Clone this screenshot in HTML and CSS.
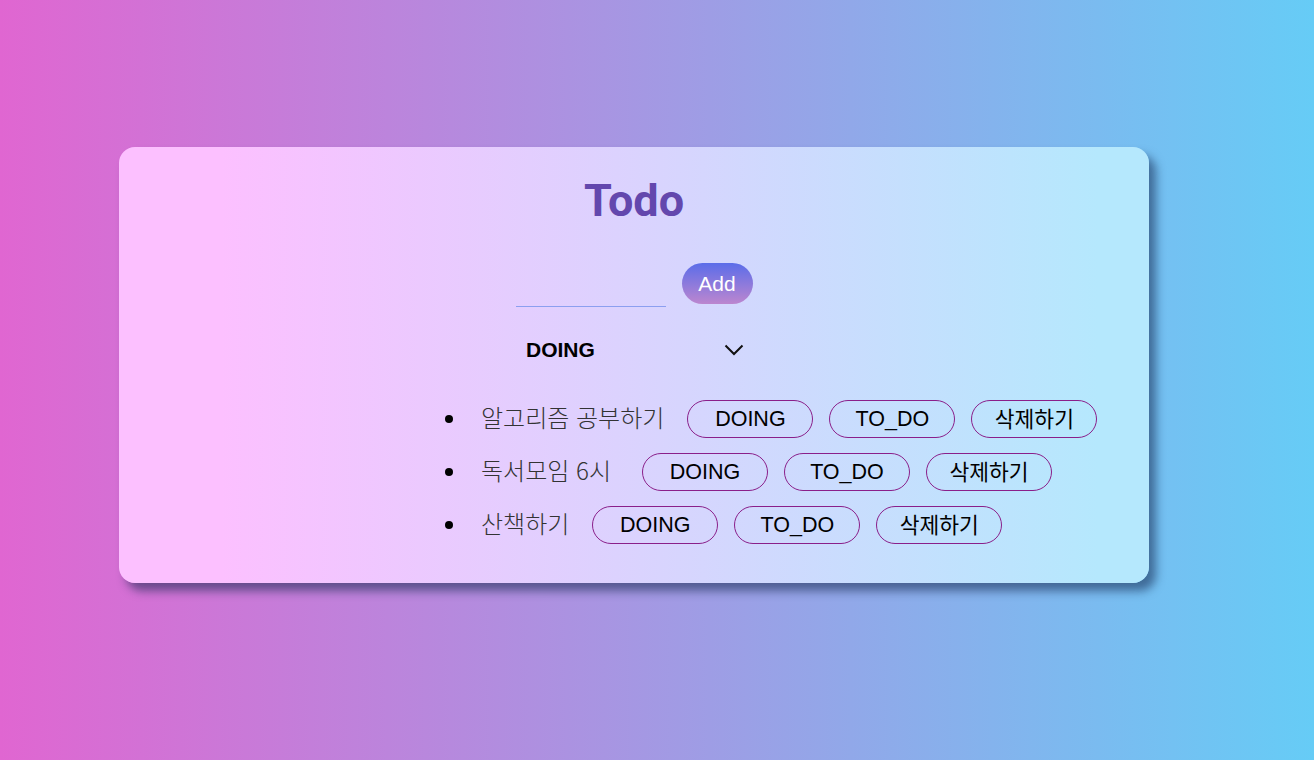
FILE: index.html
```html
<!DOCTYPE html>
<html lang="ko">
<head>
<meta charset="utf-8">
<title>Todo</title>
<link rel="stylesheet" href="styles.css">
</head>
<body>
<div class="page">
  <main class="card">
    <h1 class="title">Todo</h1>
    <form class="add-form">
      <input class="add-input" type="text">
      <button class="add-btn" type="button">Add</button>
    </form>
    <div class="select">
      <span class="select-text">DOING</span>
      <svg class="chev" width="20" height="12" viewBox="0 0 20 12"><path d="M1.5 1.5 L10 10 L18.5 1.5" fill="none" stroke="#111" stroke-width="2"/></svg>
    </div>
    <ul class="list">
      <li class="item"><span class="dot"></span><span class="item-text item-text--a">알고리즘 공부하기</span><button class="pill">DOING</button><button class="pill">TO_DO</button><button class="pill pill--ko">삭제하기</button></li>
      <li class="item"><span class="dot"></span><span class="item-text item-text--b">독서모임 6시</span><button class="pill">DOING</button><button class="pill">TO_DO</button><button class="pill pill--ko">삭제하기</button></li>
      <li class="item"><span class="dot"></span><span class="item-text item-text--c">산책하기</span><button class="pill">DOING</button><button class="pill">TO_DO</button><button class="pill pill--ko">삭제하기</button></li>
    </ul>
  </main>
</div>
</body>
</html>
```
FILE: styles.css
```css
* { box-sizing: border-box; }
html, body { margin: 0; padding: 0; }
body {
  width: 1314px;
  height: 760px;
  background: linear-gradient(90deg, #e066d1 0%, #66ccf6 100%);
  font-family: "Liberation Sans", Arial, "Noto Sans CJK KR", sans-serif;
  overflow: hidden;
}
.page {
  padding: 147px 0 0 119px;
}
.card {
  width: 1030px;
  height: 436px;
  border-radius: 16px;
  background: linear-gradient(90deg, #fcc0ff 0%, #fcc0ff 10%, #b5e8fd 95%, #b5e8fd 100%);
  box-shadow: 7px 8px 10px rgba(20, 40, 80, 0.55);
  display: flex;
  flex-direction: column;
  align-items: center;
  padding-top: 28px;
}
.title {
  margin: 0;
  font-family: Roboto, "Liberation Sans", sans-serif;
  font-weight: 700;
  font-size: 45px;
  line-height: 52px;
  color: #6347ad;
}
.add-form {
  margin-top: 36px;
  display: flex;
  align-items: flex-end;
  gap: 16px;
}
.add-input {
  width: 150px;
  height: 32px;
  border: none;
  border-bottom: 1px solid #8c9ff0;
  background: transparent;
  outline: none;
}
.add-btn {
  width: 71px;
  height: 41px;
  border: none;
  border-radius: 21px;
  background: linear-gradient(180deg, #5b6de9 0%, #bc86cf 100%);
  color: #fff;
  font-family: "Liberation Sans", Arial, sans-serif;
  font-size: 21px;
  padding: 0;
  margin-bottom: 3px;
}
.select {
  margin-top: 28px;
  width: 240px;
  height: 30px;
  display: flex;
  align-items: center;
  justify-content: space-between;
  padding: 0 10px 0 12px;
}
.select-text {
  font-weight: 700;
  font-size: 21px;
  color: #000;
}
.chev { display: block; }
.list {
  list-style: none;
  margin: 35px 0 0 0;
  padding: 0 0 0 326px;
  align-self: stretch;
  display: flex;
  flex-direction: column;
  gap: 15px;
}
.item {
  display: flex;
  align-items: center;
  height: 38px;
}
.dot {
  width: 8px;
  height: 8px;
  border-radius: 50%;
  background: #000;
  margin-right: 28px;
  flex: none;
}
.item-text {
  font-family: "Noto Sans CJK KR", sans-serif;
  font-weight: 300;
  font-size: 24px;
  color: #333;
  margin-right: 23px;
  position: relative;
  top: -3px;
}
.item-text--b { margin-right: 31px; }
.item-text--c { margin-right: 23px; }
.pill {
  width: 126px;
  height: 38px;
  border: 1px solid #8a1f8a;
  border-radius: 19px;
  background: transparent;
  font-family: "Liberation Sans", Arial, "Noto Sans CJK KR", sans-serif;
  font-size: 21.5px;
  color: #000;
  padding: 0;
  margin-right: 16px;
}
.pill--ko {
  padding-bottom: 3px;
}
```
